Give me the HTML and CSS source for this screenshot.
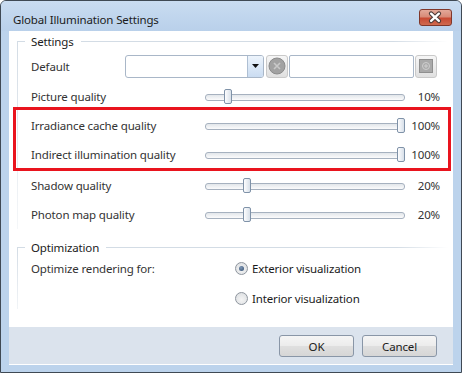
FILE: index.html
```html
<!DOCTYPE html>
<html lang="en">
<head>
    <meta charset="UTF-8">
    <title>Global Illumination Settings</title>
    <link rel="stylesheet" href="styles.css">
</head>
<body>
    <div class="window">
        <div class="titlebar">
            <span class="title">Global Illumination Settings</span>
            <div class="close">
                <svg width="33" height="17" viewBox="0 0 33 17">
                    <path d="M12.5 4.5 L20.5 12 M20.5 4.5 L12.5 12" stroke="#4a3a38" stroke-width="4.6" stroke-linecap="round"/>
                    <path d="M12.5 4.5 L20.5 12 M20.5 4.5 L12.5 12" stroke="#fff" stroke-width="2.4" stroke-linecap="round"/>
                </svg>
            </div>
        </div>

        <div class="client">
            <div class="content">
                <div class="group">
                    <div class="group-title"><span>Settings</span></div>

                    <div class="row">
                        <span class="label label-default">Default</span>
                        <div class="combo">
                            <div class="combo-field"></div>
                            <div class="combo-arrow">
                                <svg width="7" height="4" viewBox="0 0 7 4"><path d="M0 0 H7 L3.5 4 Z" fill="#111"/></svg>
                            </div>
                        </div>
                        <div class="icon-btn clear-btn">
                            <svg width="18" height="18" viewBox="0 0 18 18">
                                <circle cx="9" cy="9" r="8" fill="#a2a2a2" stroke="#8c8c8c"/>
                                <path d="M6 6 L12 12 M12 6 L6 12" stroke="#c9c9c9" stroke-width="1.6"/>
                            </svg>
                        </div>
                        <div class="textbox"></div>
                        <div class="icon-btn add-btn">
                            <svg width="14" height="14" viewBox="0 0 14 14">
                                <rect x="0.5" y="0.5" width="13" height="13" fill="#a9a9a9" stroke="#8f8f8f"/>
                                <circle cx="7" cy="7" r="3.5" fill="none" stroke="#cfcfcf"/>
                                <path d="M7 5 V9 M5 7 H9" stroke="#cfcfcf"/>
                            </svg>
                        </div>
                    </div>

                    <div class="row">
                        <span class="label">Picture quality</span>
                        <div class="slider"><div class="thumb" style="--v: 0.1"></div></div>
                        <span class="pct">10%</span>
                    </div>

                    <div class="highlight">
                        <div class="row">
                            <span class="label">Irradiance cache quality</span>
                            <div class="slider"><div class="thumb" style="--v: 1"></div></div>
                            <span class="pct">100%</span>
                        </div>
                        <div class="row row-tight">
                            <span class="label">Indirect illumination quality</span>
                            <div class="slider"><div class="thumb" style="--v: 1"></div></div>
                            <span class="pct">100%</span>
                        </div>
                    </div>

                    <div class="row">
                        <span class="label">Shadow quality</span>
                        <div class="slider"><div class="thumb" style="--v: 0.2"></div></div>
                        <span class="pct">20%</span>
                    </div>
                    <div class="row row-last">
                        <span class="label">Photon map quality</span>
                        <div class="slider"><div class="thumb" style="--v: 0.2"></div></div>
                        <span class="pct">20%</span>
                    </div>
                </div>

                <div class="group group-opt">
                    <div class="group-title"><span>Optimization</span></div>
                    <div class="opt-row">
                        <span class="label label-opt">Optimize rendering for:</span>
                        <label class="radio"><span class="radio-dot checked"></span>Exterior visualization</label>
                    </div>
                    <div class="opt-row opt-row-second">
                        <span class="label label-opt"></span>
                        <label class="radio"><span class="radio-dot"></span>Interior visualization</label>
                    </div>
                </div>
            </div>

            <div class="footer">
                <div class="btn">OK</div>
                <div class="btn">Cancel</div>
            </div>
        </div>
    </div>
</body>
</html>
```

FILE: styles.css
```css
* {
    margin: 0;
    padding: 0;
    box-sizing: border-box;
}

body {
    font-family: 'Noto Sans', 'Open Sans', sans-serif;
    font-size: 11.5px;
    letter-spacing: -0.15px;
    color: #333;
    background: #fff;
}

.window {
    width: 462px;
    height: 373px;
    border: 1px solid #3f4954;
    border-radius: 6px 6px 0 0;
    background: #bcd3ec;
    padding-bottom: 7px;
    display: flex;
    flex-direction: column;
}

.titlebar {
    height: 30px;
    display: flex;
    align-items: center;
    justify-content: space-between;
    padding: 6px 9px 0 12px;
    border-radius: 5px 5px 0 0;
    background: linear-gradient(to bottom, #c9dcf1, #b9d0ea);
}

.title {
    color: #1b1b1b;
}

.close {
    width: 33px;
    height: 17px;
    border: 1px solid #80372a;
    border-radius: 3px;
    background: linear-gradient(to bottom, #e3a999 0%, #d88b78 45%, #c84a33 55%, #cf6a4f 100%);
    display: flex;
    margin-top: -4px;
}

.close svg {
    margin: -1px 0 0 -1px;
}

.client {
    margin: 0 8px;
    flex: 1;
    background: #fff;
    display: flex;
    flex-direction: column;
}

.content {
    flex: 1;
    padding: 0 5px 0 8px;
}

.group {
    background: linear-gradient(to bottom, #d3dce5, rgba(211, 220, 229, 0.2)) no-repeat 0 10px / 1px 100%;
}

.group-opt {
    margin-top: 8px;
}

.group-title {
    height: 20px;
    display: flex;
    align-items: center;
    color: #1b1b1b;
}

.group-title::before {
    content: "";
    width: 8px;
    height: 1px;
    background: #d3dce5;
}

.group-title span {
    padding: 0 7px 0 6px;
}

.group-title::after {
    content: "";
    flex: 1;
    height: 1px;
    background: linear-gradient(to right, #d3dce5 85%, rgba(211, 220, 229, 0));
}

.row {
    height: 30px;
    display: flex;
    align-items: center;
    padding: 0 8px 0 14px;
}

.row:first-of-type {
    height: 29px;
}

.row-tight {
    height: 28px;
}

.row-last {
    height: 29px;
}

.label {
    width: 174px;
    flex: none;
}

.label-default {
    width: 94px;
}

.slider {
    position: relative;
    width: 200px;
    height: 15px;
    flex: none;
}

.slider::before {
    content: "";
    position: absolute;
    left: 0;
    right: 0;
    top: 5px;
    height: 5px;
    border: 1px solid #a6b1bf;
    border-radius: 3px;
    background: linear-gradient(to bottom, #e2e6ea, #fbfbfc);
}

.thumb {
    position: absolute;
    top: 0;
    left: calc(var(--v) * 192px);
    width: 8px;
    height: 15px;
    border: 1px solid #7f92a8;
    border-radius: 2px;
    background: linear-gradient(to right, #fdfdfe, #d8e0e9);
}

.pct {
    flex: 1;
    text-align: right;
}

.highlight {
    margin: -4px -3px -1px -4px;
    padding: 1px 0 0 1px;
    border: 3px solid #e9141e;
}

.combo {
    width: 139px;
    height: 23px;
    border: 1px solid #a9b7c8;
    border-radius: 3px;
    display: flex;
    flex: none;
    overflow: hidden;
}

.combo-field {
    flex: 1;
}

.combo-arrow {
    width: 16px;
    border-left: 1px solid #aebfd3;
    background: linear-gradient(to bottom, #edf4fc, #cadcf1);
    display: flex;
    align-items: center;
    justify-content: center;
}

.icon-btn {
    width: 22px;
    height: 23px;
    flex: none;
    border: 1px solid #c9c9c9;
    border-radius: 3px;
    background: linear-gradient(to bottom, #f6f6f6, #e0e0e0);
    display: flex;
    align-items: center;
    justify-content: center;
}

.clear-btn {
    margin-left: 2px;
}

.add-btn {
    margin-left: 1px;
}

.textbox {
    width: 125px;
    height: 23px;
    flex: none;
    margin-left: 1px;
    border: 1px solid #a9b7c8;
    border-radius: 2px;
}

.opt-row {
    height: 22px;
    display: flex;
    align-items: center;
    padding-left: 14px;
}

.opt-row-second {
    margin-top: 8px;
}

.label-opt {
    width: 204px;
}

.radio {
    display: flex;
    align-items: center;
    gap: 4px;
    color: #1b1b1b;
}

.radio-dot {
    width: 13px;
    height: 13px;
    border: 1px solid #8e959e;
    border-radius: 50%;
    background: radial-gradient(circle at 50% 60%, #f4f4f4, #d9dcdf);
    display: flex;
    align-items: center;
    justify-content: center;
}

.radio-dot.checked::after {
    content: "";
    width: 5px;
    height: 5px;
    border-radius: 50%;
    background: radial-gradient(circle at 40% 35%, #7f98b6, #2f4a6c);
}

.footer {
    height: 38px;
    flex: none;
    display: flex;
    justify-content: flex-end;
    gap: 8px;
    padding: 8px 16px 0 0;
    background: #dbe3ed;
    border-bottom: 1px solid #fff;
}

.btn {
    width: 75px;
    height: 22px;
    border: 1px solid #8996a7;
    border-radius: 3px;
    background: linear-gradient(to bottom, #f5f5f5 0%, #ececec 48%, #dfdfdf 52%, #d6d6d6 100%);
    display: flex;
    align-items: center;
    justify-content: center;
    color: #1b1b1b;
}
```
